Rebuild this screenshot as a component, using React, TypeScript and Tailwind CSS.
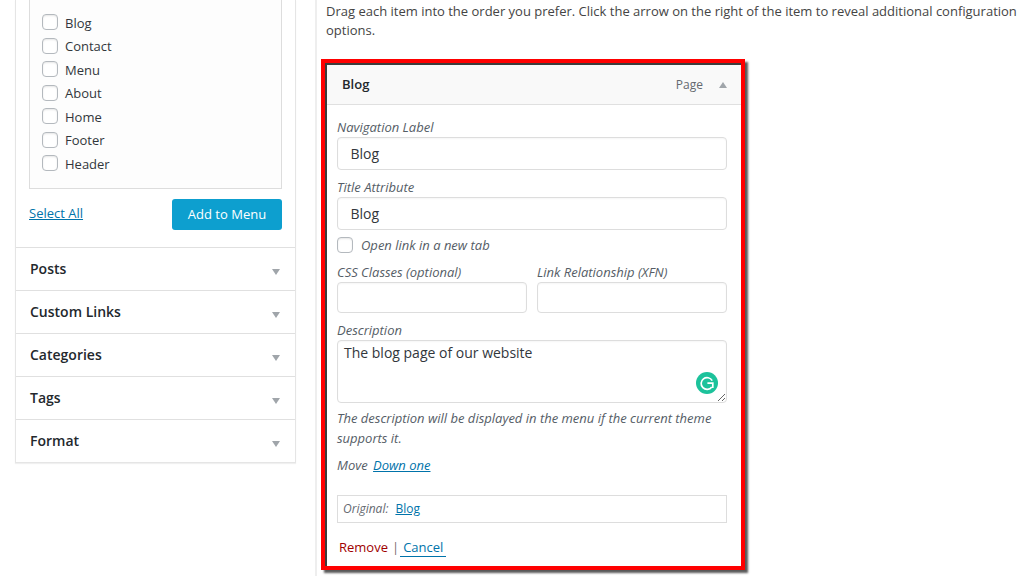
const pages = ['Blog', 'Contact', 'Menu', 'About', 'Home', 'Footer', 'Header']
const sections = ['Posts', 'Custom Links', 'Categories', 'Tags', 'Format']

function Checkbox({ className = '' }: { className?: string }) {
  return (
    <input
      type="checkbox"
      className={`h-4 w-4 shrink-0 appearance-none rounded-[4px] border border-[#b4b9be] bg-white shadow-[inset_0_1px_2px_rgba(0,0,0,0.1)] ${className}`}
    />
  )
}

function Sidebar() {
  return (
    <aside className="ml-[15px] h-[463px] w-[281px] shrink-0 border-x border-b border-[#e5e5e5] bg-white shadow-[0_1px_1px_rgba(0,0,0,0.06)]">
      <div className="px-[13px]">
        <ul className="flex h-[189px] flex-col border-x border-b border-[#dddddd] bg-[#fdfdfd] pl-[12px] pt-[10.3px]">
          {pages.map((page) => (
            <li key={page} className="flex h-[23.5px] items-center gap-[7px] text-[13px] text-[#32373c]">
              <Checkbox />
              <span className="mt-[3px]">{page}</span>
            </li>
          ))}
        </ul>
        <div className="mt-[10px] flex h-[31px] items-start justify-between">
          <a className="mt-[5px] text-[13px] text-[#0073aa] underline">Select All</a>
          <button className="h-[31px] w-[110px] rounded-[3px] bg-[#0d9fcf] text-[13px] text-white">Add to Menu</button>
        </div>
      </div>
      <div className="mt-[17px]">
        {sections.map((section) => (
          <div key={section} className="flex h-[43px] items-center justify-between border-t border-[#e0e0e0] pl-[14px] pr-[15px]">
            <span className="mb-[2px] text-[14px] font-semibold text-[#23282d]">{section}</span>
            <span className="mt-[5px] h-0 w-0 border-x-[4px] border-t-[6px] border-x-transparent border-t-[#a0a5aa]" />
          </div>
        ))}
      </div>
    </aside>
  )
}

function Field({ label, value, className = '', inputClass = 'h-[33px]' }: { label: string; value?: string; className?: string; inputClass?: string }) {
  return (
    <label className={`block ${className}`}>
      <span className="block text-[13px] leading-[19px] text-[#555d66] italic">{label}</span>
      <input
        defaultValue={value}
        className={`block w-full rounded-[4px] border border-[#dddddd] bg-white px-[12.5px] text-[14px] text-[#32373c] shadow-[inset_0_1px_2px_rgba(0,0,0,0.04)] outline-none ${inputClass}`}
      />
    </label>
  )
}

function GrammarlyBadge() {
  return (
    <svg viewBox="0 0 22 22" className="absolute right-[9px] bottom-[9px] h-[22px] w-[22px]">
      <circle cx="11" cy="11" r="11" fill="#1cc29b" />
      <path d="M16.2 8.6A5.9 5.9 0 1 0 15.8 15" fill="none" stroke="#ffffff" strokeWidth="1.7" />
      <path d="M11.4 11.2H16.8V16" fill="none" stroke="#ffffff" strokeWidth="1.7" />
    </svg>
  )
}

function MenuItemPanel() {
  return (
    <section className="-ml-[5px] mt-[19px] h-[511px] w-[424px] border-4 border-[#ff0000] shadow-[3px_3px_2px_rgba(0,0,0,0.65)]">
      <div className="h-full border-l-2 border-t-2 border-[#3c3c3c]">
        <header className="flex h-[40px] items-center justify-between border-b border-[#e0e0e0] bg-[#f9f9f9] pl-[15px] pr-[14px]">
          <span className="text-[13px] font-semibold text-[#23282d]">Blog</span>
          <div className="flex items-center gap-[16px]">
            <span className="text-[12px] text-[#646970]">Page</span>
            <span className="h-0 w-0 border-x-[4px] border-b-[6px] border-x-transparent border-b-[#a0a5aa]" />
          </div>
        </header>
        <div className="pl-[10px] pr-[14px] pt-[13px]">
          <Field label="Navigation Label" value="Blog" />
          <Field label="Title Attribute" value="Blog" className="mt-[8px]" />
          <div className="mt-[6px] flex items-center gap-2 text-[13px] leading-[18px] italic text-[#555d66]">
            <Checkbox />
            <span>Open link in a new tab</span>
          </div>
          <div className="mt-[9px] flex gap-[10px]">
            <Field label="CSS Classes (optional)" className="flex-1" inputClass="h-[31px]" />
            <Field label="Link Relationship (XFN)" className="flex-1" inputClass="h-[31px]" />
          </div>
          <label className="mt-[8px] block">
            <span className="block text-[13px] leading-[19px] text-[#555d66] italic">Description</span>
            <div className="relative">
              <textarea
                defaultValue="The blog page of our website"
                className="block h-[63px] w-full rounded-[4px] border border-[#dddddd] bg-white px-[6px] py-[2px] text-[14px] leading-[20px] text-[#32373c] shadow-[inset_0_1px_2px_rgba(0,0,0,0.04)] outline-none"
              />
              <GrammarlyBadge />
            </div>
          </label>
          <p className="mt-[5px] text-[13px] leading-[20px] text-[#555d66] italic">
            The description will be displayed in the menu if the current theme supports it.
          </p>
          <p className="mt-[7px] text-[13px] leading-[20px] text-[#555d66] italic">
            Move <a className="ml-[2px] text-[#0073aa] underline">Down one</a>
          </p>
          <div className="mt-[20px] flex h-[28px] items-center border border-[#dddddd] pl-[5px] text-[12px] text-[#646970]">
            <span className="italic">Original:</span>
            <a className="ml-[7px] text-[#0073aa] underline">Blog</a>
          </div>
          <div className="mt-[14px] flex items-center pl-[2px] text-[13px] leading-[20px]">
            <a className="text-[#a00000]">Remove</a>
            <span className="ml-[4px] mr-[1px] text-[#7a6a70]">|</span>
            <a className="border-b border-[#0073aa] px-[3px] leading-[18px] text-[#0073aa]">Cancel</a>
          </div>
        </div>
      </div>
    </section>
  )
}

export default function App() {
  return (
    <div className="flex h-[576px] w-[1024px] overflow-hidden bg-white font-['Open_Sans',sans-serif]">
      <Sidebar />
      <main className="ml-[19px] flex-1 border-l-2 border-[#eeeeee] pl-[9px]">
        <p className="w-[695px] pt-[2px] text-[13px] leading-[19px] text-[#444444]">
          Drag each item into the order you prefer. Click the arrow on the right of the item to reveal additional configuration options.
        </p>
        <MenuItemPanel />
      </main>
    </div>
  )
}
